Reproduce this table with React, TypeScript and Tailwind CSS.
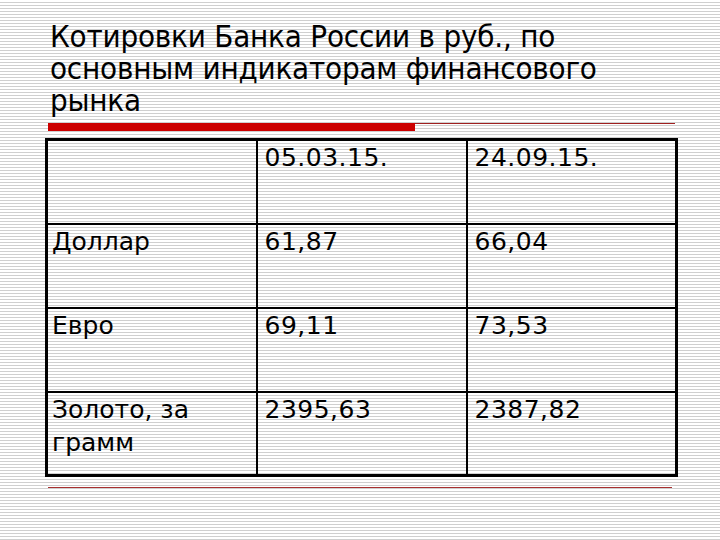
const rows = [
    { name: "", a: "05.03.15.", b: "24.09.15." },
    { name: "Доллар", a: "61,87", b: "66,04" },
    { name: "Евро", a: "69,11", b: "73,53" },
    { name: "Золото, за грамм", a: "2395,63", b: "2387,82" },
];

const App = () => {
    return (
        <div className="w-[720px] h-[540px] overflow-hidden bg-[repeating-linear-gradient(to_bottom,#ffffff_0px,#ffffff_2px,#cfcfcf_2px,#cfcfcf_3px)] text-black font-['DejaVu_Sans_Condensed','DejaVu_Sans',sans-serif]">
            <div className="pl-[50px] pt-[20px] h-[123px] text-[31px] leading-[32px] tracking-[-0.2px] whitespace-nowrap">
                Котировки Банка России в руб., по
                <br />
                основным индикаторам финансового
                <br />
                рынка
            </div>

            <div className="flex ml-[48px] w-[627px]">
                <div className="w-[367px] h-[8px] bg-[#cc0000]"></div>
                <div className="flex-1 h-px bg-[#a02020]"></div>
            </div>

            <table className="ml-[45px] mt-[7px] w-[630px] border-collapse border-[3px] border-black table-fixed font-['DejaVu_Sans',sans-serif] text-[25px] leading-[33px]">
                <tbody>
                    {rows.map((row, i) => (
                        <tr key={i} className="h-[84px]">
                            <td className="w-[210px] border-2 border-black align-top px-[4px] pt-0">
                                {row.name}
                            </td>
                            <td className="w-[210px] border-2 border-black align-top px-[7px] pt-0 tracking-[0.5px]">
                                {row.a}
                            </td>
                            <td className="w-[210px] border-2 border-black align-top px-[7px] pt-0 tracking-[0.5px]">
                                {row.b}
                            </td>
                        </tr>
                    ))}
                </tbody>
            </table>

            <div className="ml-[48px] mt-[10px] w-[624px] h-px bg-[#a83030]"></div>
        </div>
    );
};

export default App;
